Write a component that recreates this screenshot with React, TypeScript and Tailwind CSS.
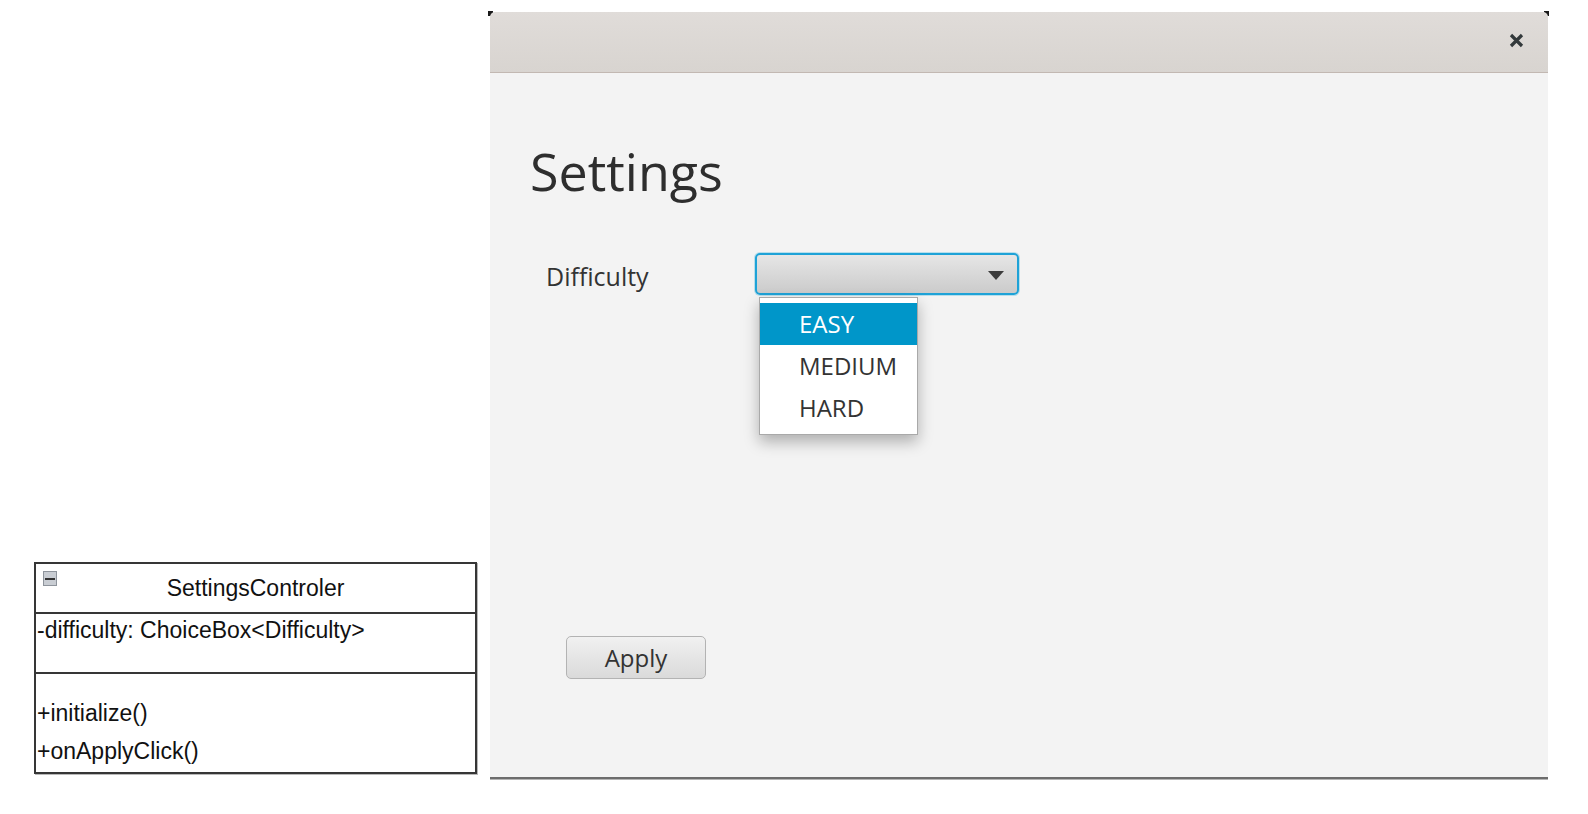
import React from 'react'

function UmlClass() {
  return (
    <div className="ml-[34px] mt-[562px] flex h-[212px] w-[443px] flex-col border-2 border-[#363636] bg-white text-[23px] text-[#111] shadow-[1px_1px_0_#b8b8b8]" style={{ fontFamily: '"Liberation Sans", Arial, sans-serif' }}>
      <div className="relative h-[50px] shrink-0 border-b-2 border-[#363636] text-center leading-[48px]">
        <span className="absolute left-[7px] top-[7px] flex h-[15px] w-[14px] items-center justify-center border border-[#8e949c] bg-[#c9cdd3]">
          <span className="h-[2px] w-[10px] bg-[#333]" />
        </span>
        SettingsControler
      </div>
      <div className="h-[60px] shrink-0 border-b-2 border-[#363636] pl-[1px] pt-[3px] leading-[26px]">
        -difficulty: ChoiceBox&lt;Difficulty&gt;
      </div>
      <div className="flex flex-1 flex-col pl-[1px] pt-[20px] leading-[38px]">
        <div>+initialize()</div>
        <div>+onApplyClick()</div>
      </div>
    </div>
  )
}

const items = ['EASY', 'MEDIUM', 'HARD']

function ChoiceBox() {
  return (
    <div className="relative h-[42px] w-[264px] rounded-[5px] border-2 border-[#1ea2d7] bg-gradient-to-b from-[#e6e6e6] to-[#cbcbcb] shadow-[0_0_0_1px_rgba(3,158,211,0.25)]">
      <svg className="absolute right-[13px] top-[16px]" width="16" height="9" viewBox="0 0 16 9">
        <path d="M0 0 L16 0 L8 9 Z" fill="#3c3c3c" />
      </svg>
      <div className="absolute left-[2px] top-[42px] z-10 w-[159px] border border-[#a9a9a9] bg-white py-[5px] shadow-[0_7px_14px_rgba(0,0,0,0.28)]">
        {items.map((item, i) => (
          <div key={item} className={`h-[42px] pl-[39px] text-[24px] leading-[42px] ${i === 0 ? 'bg-[#0096c9] text-white' : 'text-[#333]'}`}>
            {item}
          </div>
        ))}
      </div>
    </div>
  )
}

function SettingsWindow() {
  return (
    <div className="relative mt-[12px] flex h-[767px] w-[1058px] flex-col" style={{ fontFamily: '"Open Sans", "Noto Sans", sans-serif' }}>
      <span className="absolute -left-[2px] -top-[1px] h-[5px] w-[5px] bg-[#1a1a1a]" />
      <span className="absolute -right-[1px] -top-[1px] h-[5px] w-[5px] bg-[#1a1a1a]" />
      <div className="relative flex h-[61px] shrink-0 items-center justify-end rounded-t-[5px] border-b border-[#c2b8b2] bg-gradient-to-b from-[#e0dcd9] to-[#d8d4d0] pb-[4px] pr-[24px]">
        <svg width="15" height="15" viewBox="0 0 15 15">
          <path d="M2 2 L13 13 M13 2 L2 13" stroke="#33393b" strokeWidth="3.2" strokeLinecap="butt" />
        </svg>
      </div>
      <div className="flex flex-1 flex-col border-b-2 border-[#6c6c6c] bg-[#f3f3f3] pl-[40px] text-[#333] shadow-[0_1px_0_#b4b4b4]">
        <h1 className="mt-[68px] text-[52px] leading-[60px] text-[#2e2e2e]">Settings</h1>
        <div className="mt-[52px] flex items-start">
          <div className="ml-[16px] mt-[8px] w-[209px] text-[25px] leading-[30px]">Difficulty</div>
          <ChoiceBox />
        </div>
        <button className="ml-[36px] mt-[341px] h-[43px] w-[140px] rounded-[5px] border border-[#b3b3b3] bg-gradient-to-b from-[#f1f1f1] to-[#dadada] text-[24px] text-[#333]">
          Apply
        </button>
      </div>
    </div>
  )
}

export default function App() {
  return (
    <div className="flex h-[814px] w-[1588px] items-start overflow-hidden bg-white">
      <div className="w-[490px] shrink-0">
        <UmlClass />
      </div>
      <SettingsWindow />
    </div>
  )
}
